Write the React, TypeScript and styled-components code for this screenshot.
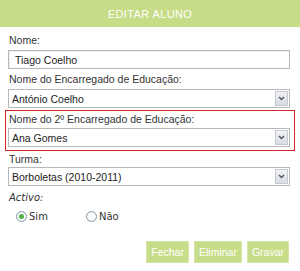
import styled, { createGlobalStyle } from 'styled-components';

const GlobalStyle = createGlobalStyle`
  html, body {
    margin: 0;
    padding: 0;
    background: #ffffff;
  }
  body {
    font-family: 'Comic Sans MS', 'Liberation Sans', sans-serif;
  }
`;

const StyledPanel = styled.div`
  width: 300px;
  min-height: 271px;
  background: #ffffff;
  display: flex;
  flex-direction: column;
`;

const StyledHeader = styled.div`
  flex-shrink: 0;
  height: 27px;
  background: #c6dc86;
  color: #ffffff;
  font-size: 11px;
  display: flex;
  align-items: center;
  justify-content: center;
  letter-spacing: 0.4px;
`;

const StyledForm = styled.div`
  display: flex;
  flex-direction: column;
  padding: 3px 10px 0 8px;
`;

interface labelType {
  top?: number;
  bottom?: number;
}

const StyledLabel = styled.div<labelType>`
  font-size: 10.5px;
  line-height: 13px;
  color: #333333;
  padding: ${(props) => props.top ?? 4}px 0 ${(props) => props.bottom ?? 3}px 1px;
`;

const StyledActiveLabel = styled(StyledLabel)`
  font-family: 'DejaVu Sans', sans-serif;
  font-style: italic;
  font-size: 10px;
`;

const StyledInput = styled.div`
  height: 17px;
  flex-shrink: 0;
  border: 1px solid #b9b9b9;
  box-shadow: inset 1px 1px 0 #eeeeee;
  font-size: 10.5px;
  color: #222222;
  display: flex;
  align-items: center;
  padding-left: 6px;
`;

const StyledSelect = styled.div`
  height: 17px;
  flex-shrink: 0;
  border: 1px solid #b9b9b9;
  font-size: 10.5px;
  color: #222222;
  display: flex;
  align-items: center;
  justify-content: space-between;
  padding-left: 3px;
`;

const StyledArrowButton = styled.div`
  width: 13px;
  height: 15px;
  margin-right: 1px;
  border: 1px solid #c4c9d2;
  background: linear-gradient(#f1f2f5, #d8dce3);
  box-sizing: border-box;
  display: flex;
  align-items: center;
  justify-content: center;
`;

const StyledHighlight = styled.div`
  border: 1px solid #d9232a;
  margin: 2px -5px 0 -3px;
  padding: 0 4px 3px 2px;
  display: flex;
  flex-direction: column;
`;

const StyledRadioRow = styled.div`
  display: flex;
  padding: 5px 0 0 8px;
  font-family: 'DejaVu Sans', sans-serif;
  font-size: 10px;
  color: #333333;
`;

const StyledRadioOption = styled.label`
  display: flex;
  align-items: center;
  gap: 2px;
  width: 70px;
`;

interface radioCircleType {
  checked: boolean;
}

const StyledRadioCircle = styled.span<radioCircleType>`
  width: 11px;
  height: 11px;
  border-radius: 50%;
  border: 1px solid #8a9aa8;
  box-sizing: border-box;
  background: radial-gradient(circle, #ffffff 40%, #e4e7ea 100%);
  display: flex;
  align-items: center;
  justify-content: center;
  &::after {
    content: '';
    width: 5px;
    height: 5px;
    border-radius: 50%;
    background: ${(props) => (props.checked ? '#4fb34a' : 'transparent')};
  }
`;

const StyledButtonRow = styled.div`
  display: flex;
  justify-content: flex-end;
  gap: 5px;
  padding: 19px 1px 0 0;
`;

const StyledButton = styled.div`
  height: 22px;
  padding: 0 4px;
  background: #c8dd8a;
  border: 1px solid #d6e6a6;
  color: #ffffff;
  font-size: 10.5px;
  display: flex;
  align-items: center;
  box-sizing: border-box;
`;

function Chevron() {
  return (
    <svg width="7" height="5" viewBox="0 0 7 5">
      <path d="M1 1 L3.5 3.5 L6 1" fill="none" stroke="#4a5566" strokeWidth="1.4" />
    </svg>
  );
}

function Select({ value }: { value: string }) {
  return (
    <StyledSelect>
      <span>{value}</span>
      <StyledArrowButton>
        <Chevron />
      </StyledArrowButton>
    </StyledSelect>
  );
}

export default function App() {
  return (
    <>
      <GlobalStyle />
      <StyledPanel>
        <StyledHeader>EDITAR ALUNO</StyledHeader>
        <StyledForm>
          <StyledLabel>Nome:</StyledLabel>
          <StyledInput>Tiago Coelho</StyledInput>
          <StyledLabel>Nome do Encarregado de Educação:</StyledLabel>
          <Select value="António Coelho" />
          <StyledHighlight>
            <StyledLabel top={2} bottom={2}>
              Nome do 2º Encarregado de Educação:
            </StyledLabel>
            <Select value="Ana Gomes" />
          </StyledHighlight>
          <StyledLabel top={2} bottom={1}>
            Turma:
          </StyledLabel>
          <Select value="Borboletas (2010-2011)" />
          <StyledActiveLabel top={5} bottom={2}>
            Activo:
          </StyledActiveLabel>
          <StyledRadioRow>
            <StyledRadioOption>
              <StyledRadioCircle checked={true} />
              Sim
            </StyledRadioOption>
            <StyledRadioOption>
              <StyledRadioCircle checked={false} />
              Não
            </StyledRadioOption>
          </StyledRadioRow>
          <StyledButtonRow>
            <StyledButton>Fechar</StyledButton>
            <StyledButton>Eliminar</StyledButton>
            <StyledButton>Gravar</StyledButton>
          </StyledButtonRow>
        </StyledForm>
      </StyledPanel>
    </>
  );
}
